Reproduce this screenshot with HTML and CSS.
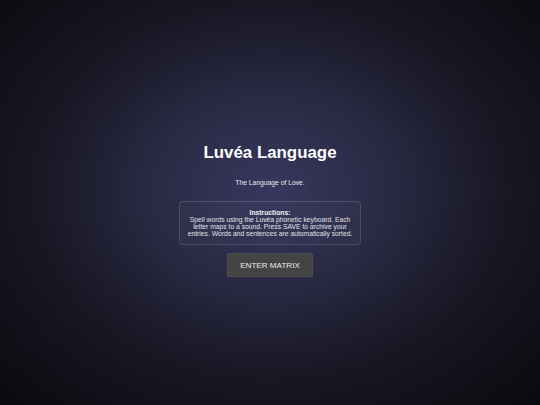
FILE: index.html
```html
<!DOCTYPE html>
<html>
<head>
<meta charset="utf-8">
<link rel="stylesheet" href="styles.css">
</head>
<body>
<main class="intro">
  <h1 class="title">Luvéa Language</h1>
  <p class="tagline">The Language of Love.</p>
  <div class="instructions">
    <strong class="inst-head">Instructions:</strong>
    <span class="inst-body">Spell words using the Luvéa phonetic keyboard. Each letter maps to a sound. Press SAVE to archive your entries. Words and sentences are automatically sorted.</span>
  </div>
  <button class="enter-btn">ENTER MATRIX</button>
</main>
</body>
</html>
```

FILE: styles.css
```css
html, body {
  margin: 0;
  padding: 0;
  height: 405px;
}
body {
  font-family: "Liberation Sans", Arial, sans-serif;
  font-size: 6.75px;
  color: #e6e6ee;
  background: radial-gradient(ellipse at 50% 47%, #36375d 0%, #2b2b47 28%, #191927 58%, #09090d 100%);
  overflow: hidden;
}
.intro {
  box-sizing: border-box;
  height: 405px;
  padding-top: 15px;
  display: flex;
  flex-direction: column;
  align-items: center;
  justify-content: center;
}
.title {
  margin: 0;
  font-size: 16.875px;
  font-weight: bold;
  color: #ffffff;
  line-height: normal;
}
.tagline {
  margin: 16px 0 0;
  color: #e8e8ee;
}
.instructions {
  box-sizing: border-box;
  width: 182px;
  margin-top: 14.6px;
  padding: 7.5px 7px 7px;
  border: 1px solid rgba(255, 255, 255, 0.14);
  border-radius: 4px;
  background: rgba(255, 255, 255, 0.02);
  text-align: center;
  color: #e0e0e8;
}
.inst-head {
  display: block;
  font-weight: bold;
  color: #f2f2f6;
}
.inst-body {
  display: block;
}
.enter-btn {
  margin-top: 8px;
  padding: 6.5px 12px;
  font-family: "Liberation Sans", Arial, sans-serif;
  font-size: 8.1px;
  font-weight: normal;
  color: #ececec;
  background: #444444;
  border: 1px solid #4e4e4e;
  border-radius: 2px;
  line-height: normal;
}
```
